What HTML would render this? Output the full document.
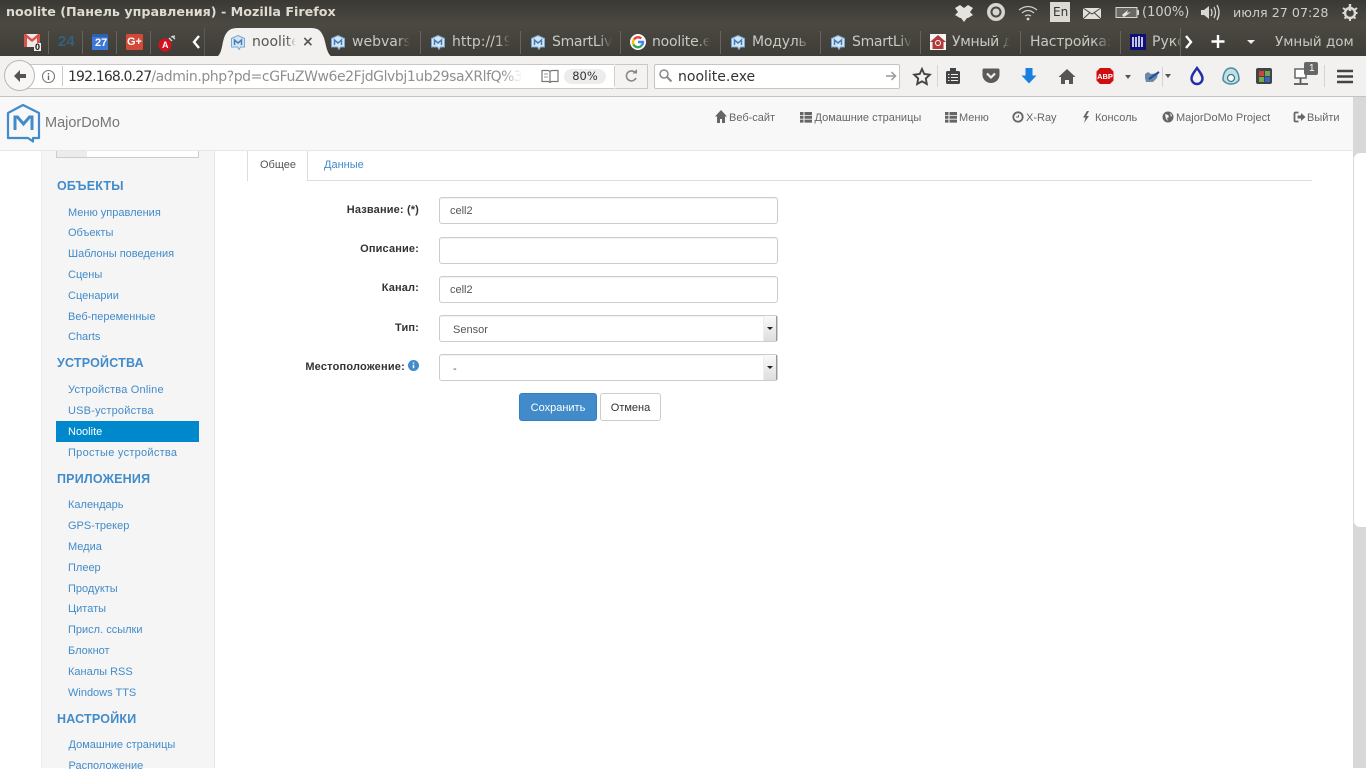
<!DOCTYPE html>
<html><head><meta charset="utf-8"><title>noolite</title>
<style>
html,body{margin:0;padding:0;width:1366px;height:768px;overflow:hidden;background:#fff;font-family:"Liberation Sans",sans-serif}
.a{position:absolute;white-space:nowrap}
.u{font-family:"DejaVu Sans","Liberation Sans",sans-serif}
#top{left:0;top:0;width:1366px;height:58px;background:linear-gradient(#3a3934,#4b4942 24px,#3e3c36 58px)}
.tab{top:30px;font:14px "DejaVu Sans",sans-serif;color:#c9c8c2;overflow:hidden;height:24px;line-height:24px;-webkit-mask-image:linear-gradient(90deg,#000 78%,transparent);mask-image:linear-gradient(90deg,#000 78%,transparent)}
.sep{top:31px;width:1px;height:23px;background:#66645c}
.nv{top:111px;font-size:11px;color:#666;line-height:14px}
.sh{left:57px;font-size:12.5px;font-weight:bold;color:#428bca;line-height:15px;letter-spacing:.2px}
.si{left:68px;font-size:11px;color:#428bca;line-height:14px}
.lb{font-size:11px;font-weight:bold;color:#333;text-align:right;line-height:14px;letter-spacing:.15px}
.in{left:439px;width:337px;height:25px;border:1px solid #ccc;border-radius:3px;background:#fff;font-size:11px;color:#555;line-height:27px;box-shadow:inset 0 1px 1px rgba(0,0,0,.06)}
.in span{margin-left:10px}
.in .s{margin-left:13px;position:relative;top:1px}
.arr{position:absolute;right:0;top:0;width:14px;height:25px;background:linear-gradient(#fafafa,#ddd);border-left:1px solid #eee;border-right:1px solid #999;box-sizing:border-box}
.arr:after{content:"";position:absolute;left:3px;top:11px;border:3px solid transparent;border-top:3px solid #222;border-bottom:0}
</style></head><body>
<div class="a" id="top"></div>
<div class="a u" style="left:6px;top:3px;font-size:12.7px;font-weight:bold;color:#dfdbd2;line-height:18px">noolite (Панель управления) - Mozilla Firefox</div>

<!-- Indicators -->
<svg class="a" style="left:950px;top:0" width="416" height="26" viewBox="950 0 416 26">
<path d="M955 8l5-3 4 3 4-3 5 3-3 4 3 3-5 3-1 0-3 4-3-4-1 0-5-3 3-3z" fill="#e5e3dd"/>
<circle cx="996" cy="12" r="9" fill="#d8d6d0"/><circle cx="996" cy="12" r="4.500" fill="none" stroke="#4a4840" stroke-width="2"/>
<path d="M1019 10q9-7 18 0M1022 13q6-5 12 0M1025 16q3-2 6 0" fill="none" stroke="#cfcdc7" stroke-width="1.300"/><circle cx="1028" cy="19" r="1.400" fill="#d8d6d0"/>
<rect x="1050" y="2" width="20" height="20" fill="#dcdad4"/>
<rect x="1083" y="8" width="18" height="11" fill="#e2e0da"/><path d="M1083 8l9 6 9-6M1083 19l7-6.500M1101 19l-7-6.500" fill="none" stroke="#444" stroke-width="1"/>
<rect x="1116" y="7.500" width="21" height="10" fill="#6a6860" stroke="#d8d6d0"/><path d="M1122 15l6-5-1 3 4-1-7 5z" fill="#e8e8e8"/><rect x="1137" y="10" width="2" height="5" fill="#d8d6d0"/>
<path d="M1201 10h3l5-4v13l-5-4h-3z" fill="#d8d6d0"/><path d="M1211 9q2 3.500 0 7M1214 7q3 5.500 0 11M1217 5q4 7.500 0 15" fill="none" stroke="#d8d6d0" stroke-width="1.300"/>
<circle cx="1350" cy="13" r="5" fill="none" stroke="#dcdad4" stroke-width="2.400"/><path d="M1350 4v7" stroke="#dcdad4" stroke-width="2.400"/><path d="M1343 8l2.500 1.800M1357 8l-2.500 1.800M1342.500 13h2M1357.500 13h-2M1344.500 18.500l2-1.800M1355.500 18.500l-2-1.800M1350 21v-3" stroke="#dcdad4" stroke-width="2"/>
</svg>
<div class="a u" style="left:1053px;top:4px;font-size:12px;color:#333;line-height:16px">En</div>
<div class="a u" style="left:1142px;top:4px;font-size:13px;color:#d0cec8;line-height:18px">(100%)</div>
<div class="a u" style="left:1233px;top:4px;font-size:12.700px;color:#d0cec8;line-height:18px">июля 27 07:28</div>

<!-- Pinned tab icons -->
<svg class="a" style="left:0;top:28px" width="240" height="30" viewBox="0 28 240 30">
<rect x="24" y="34" width="16" height="13" fill="#f0e8e8"/><path d="M24 34v13h3v-9l5 4 5-4v9h3V34h-2l-6 5-6-5z" fill="#d9534a"/>
<rect x="34" y="43" width="7" height="8" fill="#eee"/>
<rect x="48" y="31" width="1" height="23" fill="#66645c"/>
<rect x="82" y="31" width="1" height="23" fill="#66645c"/>
<rect x="92" y="34" width="16" height="16" fill="#3b78d8"/><rect x="92" y="34" width="16" height="3" fill="#2f5fb0"/>
<rect x="116" y="31" width="1" height="23" fill="#66645c"/>
<rect x="126" y="34" width="17" height="16" rx="1" fill="#d34836"/>
<rect x="150" y="31" width="1" height="23" fill="#66645c"/>
<circle cx="165" cy="45" r="6.500" fill="#d4111d"/>
<path d="M169 38l3 3M172 36l3 3M171 37l4-1" stroke="#ddd" stroke-width="1.400"/>
<path d="M199 36l-5 6 5 6" fill="none" stroke="#fff" stroke-width="2.400"/>
<rect x="204" y="28" width="1" height="30" fill="#5c5a52"/>
</svg>
<div class="a" style="left:58px;top:34px;font:bold 15px 'Liberation Sans',sans-serif;color:#33617f;line-height:16px">24</div>
<div class="a" style="left:95px;top:37px;font:bold 11px 'Liberation Sans',sans-serif;color:#fff;line-height:13px">27</div>
<div class="a" style="left:127px;top:36px;font:bold 11px 'Liberation Sans',sans-serif;color:#fff;line-height:13px">G+</div>
<div class="a" style="left:35px;top:43px;font:bold 9px 'Liberation Sans',sans-serif;color:#111;line-height:9px">0</div>
<div class="a" style="left:162px;top:40px;font:bold 9px 'Liberation Sans',sans-serif;color:#fff;line-height:10px">A</div>

<!-- Active tab -->
<svg class="a" style="left:212px;top:27px" width="125" height="31" viewBox="0 0 125 31">
<path d="M0 31c10 0 9-10 12-20 3-8 7-10 14-10h72c8 0 11 2 14 10 3 10 3 20 13 20z" fill="#f2f1ef"/>
</svg>
<div class="a tab" style="left:252px;width:44px;color:#555">noolite</div>
<div class="a" style="left:302px;top:34px;font:bold 14px 'DejaVu Sans',sans-serif;color:#555;line-height:16px">×</div>

<!-- Tabs -->
<svg width="0" height="0" style="position:absolute"><defs>
<symbol id="mj" viewBox="0 0 14 15"><path d="M7 .5L13.500 3.500v8.500H9.500L8 14.500 6.500 12H.5V3.500z" fill="#d8e6f2" stroke="#76a8d3"/><path d="M3.500 10V5l3.500 3 3.500-3v5" fill="none" stroke="#3b7fc0" stroke-width="1.500"/></symbol>
</defs></svg>
<svg class="a" style="left:231px;top:35px" width="14" height="15"><use href="#mj"/></svg>
<svg class="a" style="left:331px;top:35px" width="14" height="15"><use href="#mj"/></svg>
<svg class="a" style="left:431px;top:35px" width="14" height="15"><use href="#mj"/></svg>
<svg class="a" style="left:531px;top:35px" width="14" height="15"><use href="#mj"/></svg>
<svg class="a" style="left:731px;top:35px" width="14" height="15"><use href="#mj"/></svg>
<svg class="a" style="left:831px;top:35px" width="14" height="15"><use href="#mj"/></svg>
<div class="a tab" style="left:352px;width:58px">webvars</div>
<div class="a sep" style="left:420px"></div>
<div class="a tab" style="left:452px;width:58px">http://19</div>
<div class="a sep" style="left:520px"></div>
<div class="a tab" style="left:552px;width:60px;letter-spacing:-.3px">SmartLiv</div>
<div class="a sep" style="left:620px"></div>
<svg class="a" style="left:630px;top:34px" width="16" height="16" viewBox="0 0 16 16"><circle cx="8" cy="8" r="8" fill="#fff"/><path d="M4 5.500A4.800 4.800 0 0 1 11.300 4.500" stroke="#ea4335" stroke-width="2.400" fill="none"/><path d="M3.500 10.500A4.800 4.800 0 0 1 4 5.500" stroke="#fbbc05" stroke-width="2.400" fill="none"/><path d="M11.500 11.500A4.800 4.800 0 0 1 3.500 10.500" stroke="#34a853" stroke-width="2.400" fill="none"/><path d="M8 8h5c0 1.500-.6 2.600-1.500 3.500" stroke="#4285f4" stroke-width="2.400" fill="none"/></svg>
<div class="a tab" style="left:652px;width:58px;letter-spacing:-.2px">noolite.e</div>
<div class="a sep" style="left:720px"></div>
<div class="a tab" style="left:752px;width:58px;letter-spacing:-.2px">Модуль</div>
<div class="a sep" style="left:820px"></div>
<div class="a tab" style="left:852px;width:60px;letter-spacing:-.3px">SmartLiv</div>
<div class="a sep" style="left:920px"></div>
<svg class="a" style="left:930px;top:34px" width="16" height="16" viewBox="0 0 16 16"><rect width="16" height="16" fill="#f5f5f5"/><path d="M8 1L0 8h2.500v7h11V8H16z" fill="#b13a3a"/><circle cx="8" cy="9" r="2.500" fill="none" stroke="#fff"/></svg>
<div class="a tab" style="left:952px;width:58px;letter-spacing:-.3px">Умный д</div>
<div class="a sep" style="left:1020px"></div>
<div class="a tab" style="left:1030px;width:82px;letter-spacing:-.2px">Настройка:</div>
<div class="a sep" style="left:1120px"></div>
<svg class="a" style="left:1130px;top:34px" width="16" height="16" viewBox="0 0 16 16"><rect width="16" height="16" fill="#10107a"/><path d="M3 3v10M6 3v10M9 2v11M12 3v10" stroke="#fff" stroke-width="1.500"/></svg>
<div class="a tab" style="left:1152px;width:30px">Руко</div>
<div class="a" style="left:1180px;top:28px;width:1px;height:28px;background:#66645c"></div>
<svg class="a" style="left:1183px;top:30px" width="90" height="24" viewBox="1183 30 90 24">
<path d="M1186 36l5 6-5 6" fill="none" stroke="#fff" stroke-width="2.400"/>
<path d="M1218 35v13M1211.500 41.500h13" stroke="#fff" stroke-width="2.400"/>
<path d="M1247 40h8l-4 4z" fill="#eee"/>
</svg>
<div class="a tab" style="left:1275px;color:#c9c8c2;font-size:13.500px;-webkit-mask-image:none;mask-image:none">Умный дом</div>

<!-- Nav bar -->
<div class="a" style="left:0;top:56px;width:1366px;height:40px;background:#f2f1ef;border-bottom:1px solid #bdbcb9"></div>
<div class="a" style="left:0;top:96px;width:1366px;height:1px;background:#c4c3c0"></div>
<div class="a" style="left:18px;top:64px;width:596px;height:23px;background:#fff;border:1px solid #c9c8c4;border-left:0;border-right:0"></div>
<div class="a" style="left:4px;top:60px;width:29px;height:29px;border-radius:50%;background:#f7f6f5;border:1px solid #b8b7b3"></div>
<svg class="a" style="left:12px;top:68px" width="16" height="16" viewBox="0 0 16 16"><path d="M8 2L2 8l6 6V10h6V6H8z" fill="#555"/></svg>
<svg class="a" style="left:41px;top:69px" width="15" height="15" viewBox="0 0 15 15"><circle cx="7.500" cy="7.500" r="6" fill="none" stroke="#777" stroke-width="1.100"/><path d="M7.500 6.500v4.500M7.500 4v1.500" stroke="#666" stroke-width="1.400"/></svg>
<div class="a" style="left:62px;top:66px;width:1px;height:20px;background:#c9c8c4"></div>
<div class="a u" style="left:68px;top:68px;width:454px;overflow:hidden;font-size:14px;line-height:18px;color:#8f8f8f;letter-spacing:-.43px;-webkit-mask-image:linear-gradient(90deg,#000 96%,transparent);mask-image:linear-gradient(90deg,#000 96%,transparent)"><span style="color:#333;letter-spacing:-.85px">192.168.0.27</span>/admin.php?pd=cGFuZWw6e2FjdGlvbj1ub29saXRlfQ%3D</div>
<div class="a" style="left:615px;top:64px;width:32px;height:23px;background:#f4f3f1;border:1px solid #c9c8c4;border-left:0"></div>
<svg class="a" style="left:541px;top:69px" width="18" height="14" viewBox="0 0 18 14"><path d="M1 1.500h6.500l1.500 1 1.500-1H17v11h-6.500l-1.500 1-1.500-1H1zM9 2.500v10.500" fill="none" stroke="#777" stroke-width="1.200"/><path d="M3 5h4M3 8h4" stroke="#999"/></svg>
<div class="a u" style="left:564px;top:69px;width:42px;height:15px;border-radius:8px;background:#ececec;font-size:11.500px;line-height:15px;color:#333;text-align:center">80%</div>
<div class="a" style="left:614px;top:66px;width:1px;height:20px;background:#d0cfcb"></div>
<svg class="a" style="left:623px;top:68px" width="16" height="16" viewBox="0 0 16 16"><path d="M12.500 5A5 5 0 1 0 13 10" fill="none" stroke="#888" stroke-width="1.600"/><path d="M9.500 5.500h4.500V1z" fill="#888"/></svg>
<div class="a" style="left:654px;top:64px;width:244px;height:23px;background:#fff;border:1px solid #c5c4c0;border-radius:2px"></div>
<svg class="a" style="left:658px;top:68px" width="15" height="15" viewBox="0 0 15 15"><circle cx="6" cy="6" r="4" fill="none" stroke="#888" stroke-width="1.500"/><path d="M9 9l4.500 4.500" stroke="#888" stroke-width="2"/></svg>
<div class="a u" style="left:678px;top:68px;font-size:14px;line-height:18px;color:#333">noolite.exe</div>
<svg class="a" style="left:885px;top:70px" width="12" height="12" viewBox="0 0 12 12"><path d="M1 6h9M6.500 2l4 4-4 4" fill="none" stroke="#999" stroke-width="1.500"/></svg>

<!-- Toolbar icons -->
<svg class="a" style="left:910px;top:60px" width="456" height="32" viewBox="910 60 456 32">
<path d="M922 69l2.300 5 5.500.7-4 3.800 1 5.500-4.800-2.700-4.800 2.700 1-5.500-4-3.800 5.500-.7z" fill="none" stroke="#444" stroke-width="1.900"/>
<rect x="937" y="65" width="1" height="22" fill="#d5d4d0"/>
<rect x="946" y="71" width="14" height="13" rx="1.500" fill="#444"/><rect x="950" y="68" width="6" height="4" fill="#444"/>
<path d="M951 74.500h7M951 77.500h7M951 80.500h7M948 74.500h1.500M948 77.500h1.500M948 80.500h1.500" stroke="#eee" stroke-width="1"/>
<path d="M984 68.500h14a1.500 1.500 0 0 1 1.500 1.500v5a8.500 8 0 0 1-17 0v-5a1.500 1.500 0 0 1 1.500-1.500z" fill="#5a5a5a"/>
<path d="M987 73.500l4 4 4-4" fill="none" stroke="#f0f0f0" stroke-width="2.200"/>
<path d="M1025.500 68h7v7.500h4l-7.500 8-7.500-8h4z" fill="#1a7fe0"/>
<path d="M1067 69l-8.500 8h2.500v7h4v-4h4v4h4v-7h2.500z" fill="#555"/>
<path d="M1100 68h10l3.500 3.500v9L1110 84h-10l-3.500-3.500v-9z" fill="#cf0f0f"/>
<path d="M1125 75h6l-3 4z" fill="#555"/>
<path d="M1145 74l3-2 3 2 7-1-1 5-4 4h-7l-1-4z" fill="#6a8aa5"/><path d="M1149 79l10-7" stroke="#1d4f9a" stroke-width="2"/>
<rect x="1162" y="67" width="1" height="20" fill="#d5d4d0"/>
<path d="M1165 74h6l-3 4z" fill="#555"/>
<path d="M1197 68c3 4.500 5.500 7 5.500 10.500a5.500 5.500 0 0 1-11 0c0-3.500 2.500-6 5.500-10.500z" fill="none" stroke="#1f2fa8" stroke-width="2.400"/>
<path d="M1223 80c0-7 3-12 8-12s8 5 8 12c-2 3-5 4-8 4s-6-1-8-4z" fill="#bfe0e6" stroke="#4f8c9a" stroke-width="1.500"/>
<circle cx="1231" cy="78" r="3.500" fill="#fff" stroke="#3c7a8a" stroke-width="1.300"/>
<rect x="1256" y="68" width="16" height="16" rx="2" fill="#444"/>
<rect x="1259" y="71" width="5" height="5" fill="#c44"/><rect x="1265" y="71" width="5" height="5" fill="#6a5"/><rect x="1259" y="77" width="5" height="5" fill="#7a4"/><rect x="1265" y="77" width="5" height="5" fill="#36c"/>
<rect x="1295" y="69" width="11" height="9" fill="#fff" stroke="#666" stroke-width="1.500"/><path d="M1300.500 78v5M1294 84h14" stroke="#555" stroke-width="1.800"/>
<rect x="1304" y="62" width="14" height="13" rx="2" fill="#666"/>
<rect x="1324" y="65" width="1" height="22" fill="#d5d4d0"/>
<path d="M1337 71h16M1337 76.500h16M1337 82h16" stroke="#444" stroke-width="2.400"/>
</svg>
<div class="a" style="left:1096px;top:72px;width:18px;font:bold 7.500px 'Liberation Sans',sans-serif;color:#fff;text-align:center;line-height:9px">ABP</div>
<div class="a" style="left:1309px;top:63px;font:10px 'Liberation Sans',sans-serif;color:#fff;line-height:11px">1</div>

<!-- Page header -->
<div class="a" style="left:0;top:97px;width:1366px;height:54px;background:#f8f8f8;border-bottom:1px solid #e7e7e7;box-sizing:border-box"></div>
<svg class="a" style="left:6px;top:103px" width="35" height="40" viewBox="0 0 35 40">
<path d="M17 2L33 10v25H27v3.500L22 35H2V10z" fill="none" stroke="#428bca" stroke-width="2.200" stroke-linejoin="round"/>
<path d="M9 27V14h2.500l6 7 6-7H26v13" fill="none" stroke="#428bca" stroke-width="3"/>
</svg>
<div class="a" style="left:45px;top:114px;font-size:14.500px;color:#777;line-height:18px">MajorDoMo</div>
<svg class="a" style="left:715px;top:110px" width="12" height="13" viewBox="0 0 12 13"><path d="M6 0L0 6.500h2V13h3V9h2v4h3V6.500h2z" fill="#666"/></svg>
<div class="a nv" style="left:729px">Веб-сайт</div>
<svg class="a" style="left:800px;top:111px" width="12" height="12" viewBox="0 0 12 12"><path d="M0 1h3.500v3H0zM4.500 1H12v3H4.500zM0 4.800h3.500v3H0zM4.500 4.800H12v3H4.500zM0 8.600h3.500v3H0zM4.500 8.600H12v3H4.500z" fill="#666"/></svg>
<div class="a nv" style="left:814.500px">Домашние страницы</div>
<svg class="a" style="left:945px;top:111px" width="12" height="12" viewBox="0 0 12 12"><path d="M0 1h3.500v3H0zM4.500 1H12v3H4.500zM0 4.800h3.500v3H0zM4.500 4.800H12v3H4.500zM0 8.600h3.500v3H0zM4.500 8.600H12v3H4.500z" fill="#666"/></svg>
<div class="a nv" style="left:959px">Меню</div>
<svg class="a" style="left:1012px;top:111px" width="12" height="12" viewBox="0 0 12 12"><circle cx="6" cy="6" r="4.700" fill="none" stroke="#666" stroke-width="1.800"/><path d="M4 6h2.500V4" fill="none" stroke="#666"/></svg>
<div class="a nv" style="left:1026px">X-Ray</div>
<svg class="a" style="left:1082px;top:111px" width="8" height="12" viewBox="0 0 8 12"><path d="M5 0L1 6.500h2.500L2 12l5-7H4.300L7 0z" fill="#666"/></svg>
<div class="a nv" style="left:1095px">Консоль</div>
<svg class="a" style="left:1162px;top:111px" width="12" height="12" viewBox="0 0 12 12"><circle cx="6" cy="6" r="5.500" fill="#666"/><path d="M3 3l3 1 1 2-2 1 1 3-2-2zM8 2l2 2-1 2z" fill="#f8f8f8"/></svg>
<div class="a nv" style="left:1176px">MajorDoMo Project</div>
<svg class="a" style="left:1293px;top:111px" width="13" height="12" viewBox="0 0 13 12"><path d="M5.500 1.500H2.500a1 1 0 0 0-1 1v7a1 1 0 0 0 1 1h3" fill="none" stroke="#666" stroke-width="1.800"/><path d="M4.500 4.500h3.500V2l4.500 4-4.500 4V7.500H4.500z" fill="#666"/></svg>
<div class="a nv" style="left:1307px">Выйти</div>

<!-- Sidebar -->
<div class="a" style="left:41px;top:151px;width:172px;height:617px;background:#f5f5f5;border-left:1px solid #eee;border-right:1px solid #e6e6e6"></div>
<div class="a" style="left:56px;top:151px;width:31px;height:6px;background:#ececec;border:1px solid #ccc;border-top:0"></div>
<div class="a" style="left:87px;top:151px;width:111px;height:6px;background:#fff;border:1px solid #ccc;border-top:0;border-left:0"></div>
<div class="a sh" style="top:179px">ОБЪЕКТЫ</div>
<div class="a si" style="top:206px">Меню управления</div>
<div class="a si" style="top:226px">Объекты</div>
<div class="a si" style="top:247px">Шаблоны поведения</div>
<div class="a si" style="top:268px">Сцены</div>
<div class="a si" style="top:289px">Сценарии</div>
<div class="a si" style="top:310px">Веб-переменные</div>
<div class="a si" style="top:330px">Charts</div>
<div class="a sh" style="top:356px">УСТРОЙСТВА</div>
<div class="a si" style="top:383px;letter-spacing:.2px">Устройства Online</div>
<div class="a si" style="top:404px;letter-spacing:.2px">USB-устройства</div>
<div class="a" style="left:56px;top:421px;width:143px;height:21px;background:#0088cc"></div>
<div class="a si" style="top:425px;color:#fff">Noolite</div>
<div class="a si" style="top:446px;letter-spacing:.27px">Простые устройства</div>
<div class="a sh" style="top:472px">ПРИЛОЖЕНИЯ</div>
<div class="a si" style="top:498px">Календарь</div>
<div class="a si" style="top:519px">GPS-трекер</div>
<div class="a si" style="top:540px">Медиа</div>
<div class="a si" style="top:561px">Плеер</div>
<div class="a si" style="top:582px">Продукты</div>
<div class="a si" style="top:602px">Цитаты</div>
<div class="a si" style="top:623px">Присл. ссылки</div>
<div class="a si" style="top:644px">Блокнот</div>
<div class="a si" style="top:665px">Каналы RSS</div>
<div class="a si" style="top:686px">Windows TTS</div>
<div class="a sh" style="top:712px">НАСТРОЙКИ</div>
<div class="a si" style="top:738px;left:68.500px">Домашние страницы</div>
<div class="a si" style="top:759px;left:68.500px">Расположение</div>

<!-- Tabs in content -->
<div class="a" style="left:247px;top:180px;width:1065px;height:1px;background:#ddd"></div>
<div class="a" style="left:247px;top:151px;width:59px;height:30px;background:#fff;border-left:1px solid #ddd;border-right:1px solid #ddd"></div>
<div class="a" style="left:260px;top:158px;font-size:11px;color:#555;line-height:14px">Общее</div>
<div class="a" style="left:324px;top:158px;font-size:11px;color:#428bca;line-height:14px">Данные</div>

<!-- Form -->
<div class="a lb" style="left:250px;width:169px;top:203px">Название: (*)</div>
<div class="a in" style="top:197px"><span>cell2</span></div>
<div class="a lb" style="left:250px;width:169px;top:242px">Описание:</div>
<div class="a in" style="top:237px"></div>
<div class="a lb" style="left:250px;width:169px;top:281px">Канал:</div>
<div class="a in" style="top:276px"><span>cell2</span></div>
<div class="a lb" style="left:250px;width:169px;top:321px">Тип:</div>
<div class="a in" style="top:315px"><span class="s">Sensor</span><i class="arr"></i></div>
<div class="a lb" style="left:250px;width:155px;top:360px;letter-spacing:.2px">Местоположение:</div>
<svg class="a" style="left:408px;top:360px" width="11" height="11" viewBox="0 0 11 11"><circle cx="5.500" cy="5.500" r="5.500" fill="#428bca"/><path d="M5.500 4.800v3.500M5.500 2.500v1.300" stroke="#fff" stroke-width="1.500"/></svg>
<div class="a in" style="top:354px"><span class="s">-</span><i class="arr"></i></div>
<div class="a" style="left:519px;top:393px;width:78px;height:28px;background:#428bca;border:1px solid #357ebd;box-sizing:border-box;border-radius:3px;color:#fff;font-size:11px;line-height:28px;text-align:center">Сохранить</div>
<div class="a" style="left:600px;top:393px;width:61px;height:28px;background:#fff;border:1px solid #ccc;box-sizing:border-box;border-radius:3px;color:#333;font-size:11px;line-height:28px;text-align:center">Отмена</div>

<!-- Scrollbar -->
<div class="a" style="left:1353px;top:97px;width:13px;height:671px;background:#d8d8d8;box-sizing:border-box"></div>
<div class="a" style="left:1354px;top:153px;width:12px;height:374px;background:#fff;border-radius:6px 0 0 6px;box-sizing:border-box"></div>
</body></html>
